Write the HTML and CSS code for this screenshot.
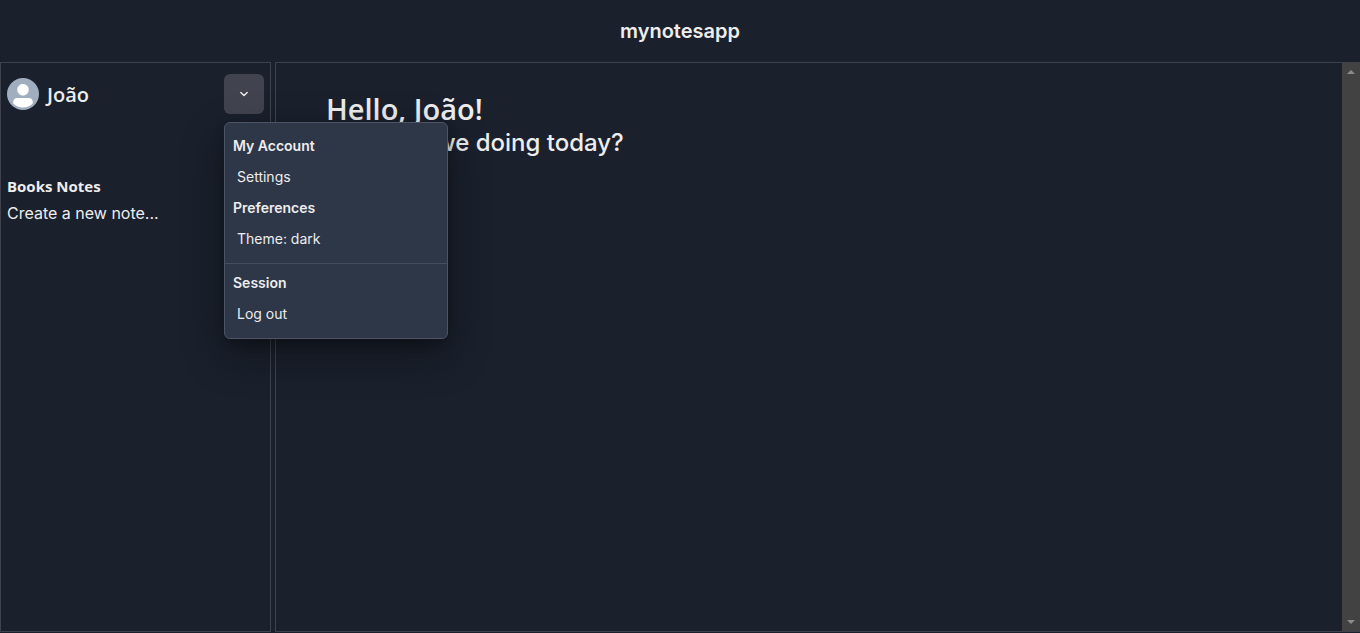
FILE: index.html
```html
<!DOCTYPE html>
<html lang="en">
<head>
<meta charset="utf-8">
<title>mynotesapp</title>
<link rel="stylesheet" href="styles.css">
</head>
<body>
<header class="topbar"><h1 class="brand">mynotesapp</h1></header>
<div class="workspace">
  <aside class="sidebar">
    <div class="profile">
      <svg class="avatar" viewBox="0 0 128 128" role="img" aria-label="João">
        <circle cx="64" cy="64" r="64" fill="#a0aec0"/>
        <path fill="#fff" d="M103,102.1388 C93.094,111.92 79.3504,118 64.1638,118 C48.8056,118 34.9294,111.768 25,101.7892 L25,95.2 C25,86.8096 31.981,80 40.6,80 L87.4,80 C96.019,80 103,86.8096 103,95.2 L103,102.1388 Z"/>
        <path fill="#fff" d="M63.9961647,24 C51.2938136,24 41,34.2938136 41,46.9961647 C41,59.7061864 51.2938136,70 63.9961647,70 C76.6985159,70 87,59.7061864 87,46.9961647 C87,34.2938136 76.6985159,24 63.9961647,24"/>
      </svg>
      <span class="username">João</span>
      <div class="menu">
        <button class="menu-button" type="button" aria-label="Account menu" aria-expanded="true">
          <svg class="chevron" viewBox="0 0 10 10" aria-hidden="true"><path d="M1.8 3.4 5 6.6 8.2 3.4" fill="none" stroke="currentColor" stroke-width="1.4" stroke-linecap="round" stroke-linejoin="round"/></svg>
        </button>
        <div class="menu-list">
          <p class="group-title">My Account</p>
          <button class="menu-item" type="button">Settings</button>
          <p class="group-title">Preferences</p>
          <button class="menu-item" type="button">Theme: dark</button>
          <hr class="divider">
          <p class="group-title">Session</p>
          <button class="menu-item" type="button">Log out</button>
        </div>
      </div>
    </div>
    <h2 class="notes-title">Books Notes</h2>
    <button class="new-note" type="button">Create a new note...</button>
  </aside>
  <main class="content">
    <div class="greeting">
      <h2 class="hello">Hello, João!</h2>
      <p class="question">What are we doing today?</p>
    </div>
    <div class="scrollbar" aria-hidden="true">
      <svg class="arrow" viewBox="0 0 8 4"><path d="M0 4 4 0 8 4Z" fill="#8b8b8b"/></svg>
      <svg class="arrow" viewBox="0 0 8 4"><path d="M0 0 4 4 8 0Z" fill="#8b8b8b"/></svg>
    </div>
  </main>
</div>
</body>
</html>
```
FILE: styles.css
```css
* { box-sizing: border-box; margin: 0; padding: 0; }
body {
  height: 100vh;
  display: flex;
  flex-direction: column;
  padding-bottom: 1px;
  overflow: hidden;
  background: #1a202c;
  color: #ededee;
  font-family: Inter, sans-serif;
  font-size: 16px;
  line-height: 24px;
}
button { font: inherit; color: inherit; background: none; border: 0; text-align: left; cursor: pointer; }
.topbar { height: 62px; display: flex; align-items: center; justify-content: center; flex: none; }
.brand { font-size: 20px; line-height: 24px; font-weight: 600; }
.workspace { flex: 1; display: flex; gap: 4px; min-height: 0; }
.sidebar { width: 20%; max-width: 271px; border: 1px solid #3f424c; padding: 11px 6px; }
.profile { display: flex; align-items: center; gap: 8px; height: 40px; }
.avatar { width: 32px; height: 32px; }
.username { flex: 1; padding-top: 2px; font-family: "Open Sans", sans-serif; font-size: 20px; font-weight: 600; }
.menu { position: relative; z-index: 1; }
.menu-button {
  width: 40px;
  height: 40px;
  display: flex;
  align-items: center;
  justify-content: center;
  border-radius: 6px;
  background: #41444e;
}
.chevron { width: 10px; height: 10px; }
.menu-list {
  position: absolute;
  top: 48px;
  left: 0;
  width: 224px;
  padding: 8px 0;
  border: 1px solid #4d5564;
  border-radius: 6px;
  background: #2d3748;
  box-shadow: 0 5px 10px rgba(0, 0, 0, 0.2), 0 15px 40px rgba(0, 0, 0, 0.4);
  font-size: 14px;
  line-height: 22px;
}
.group-title { padding: 4px 8px; font-weight: 600; }
.menu-item { display: block; width: 100%; padding: 5px 12px; }
.divider { margin: 8px 0 4px; border: 0; border-top: 1px solid #454e5d; }
.notes-title { margin-top: 60px; font-family: "Open Sans", sans-serif; font-size: 15px; line-height: 24px; font-weight: 700; }
.new-note { display: block; margin-top: 3px; }
.content { flex: 1; display: flex; justify-content: space-between; border: 1px solid #3f424c; border-right: 0; }
.greeting { padding: 28px 50px; font-weight: 500; }
.hello { font-family: "Open Sans", sans-serif; font-size: 29px; line-height: 36px; font-weight: 600; }
.question { font-size: 24px; line-height: 32px; }
.scrollbar { width: 18px; padding: 7px 5px; display: flex; flex-direction: column; justify-content: space-between; background: #424242; }
.arrow { width: 8px; height: 4px; }
```
